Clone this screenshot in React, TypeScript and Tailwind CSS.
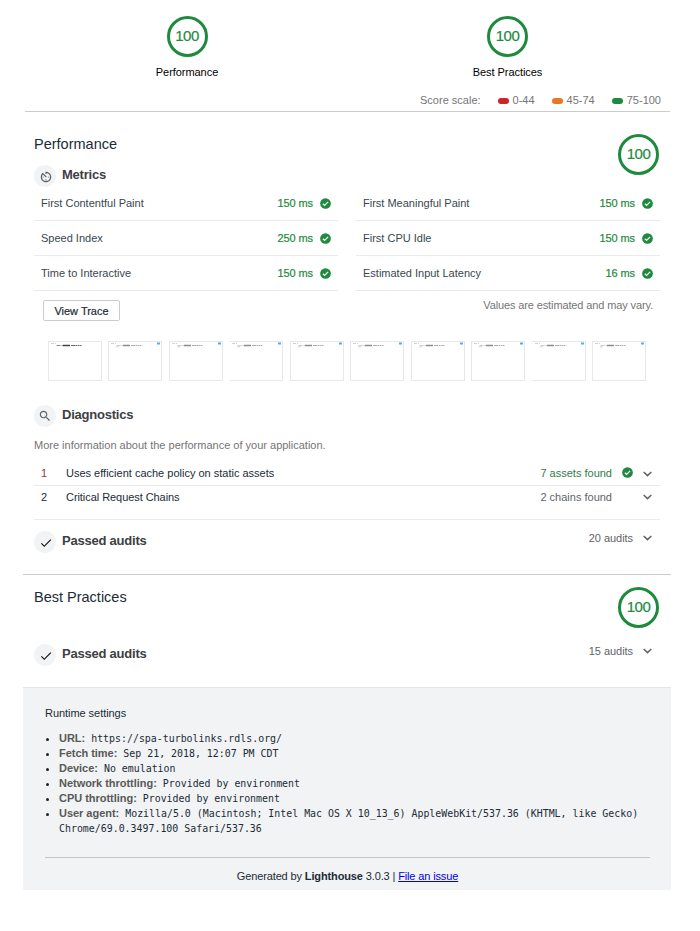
import React from "react";

function Gauge() {
  return (
    <div className="flex h-[41px] w-[41px] shrink-0 items-center justify-center rounded-full border-[3px] border-[#1e8a3e] text-[15px] leading-none tracking-[-0.45px] text-[#1e8a3e] [-webkit-text-stroke:0.2px_#1e8a3e]">
      <span className="relative -top-px">100</span>
    </div>
  );
}

function Passed() {
  return (
    <svg viewBox="1.500 1.500 21 21" className="block h-[11px] w-[11px] shrink-0">
      <circle cx="12" cy="12" r="10.200" fill="#1e8a3e" />
      <path d="M7 12.500l3.300 3.200L17 9" fill="none" stroke="#fff" strokeWidth="2.400" />
    </svg>
  );
}

function Chevron() {
  return (
    <svg viewBox="0 0 10 10" className="block h-[10px] w-[10px] shrink-0" fill="none">
      <path d="M1.700 3 5.500 6.600 9.300 3" stroke="#5f6368" strokeWidth="1.500" />
    </svg>
  );
}

function Badge({ children }: { children: React.ReactNode }) {
  return (
    <div className="flex h-[22px] w-[22px] shrink-0 items-center justify-center rounded-full bg-[#f1f3f4]">
      {children}
    </div>
  );
}

function CheckIcon() {
  return (
    <svg viewBox="0 0 24 24" className="mt-px ml-px h-[14px] w-[14px]">
      <path fill="#111" d="M9 16.170L4.830 12l-1.420 1.410L9 19 21 7l-1.410-1.410z" />
    </svg>
  );
}

function TimerIcon() {
  return (
    <svg viewBox="0 0 24 24" className="mt-px ml-px h-[14px] w-[14px]">
      <path
        fill="#5f6368"
        d="M11 17c0 .55.45 1 1 1s1-.45 1-1-.45-1-1-1-1 .45-1 1zm0-14v4h2V5.080c3.390.49 6 3.390 6 6.920 0 3.870-3.130 7-7 7s-7-3.130-7-7c0-1.680.59-3.220 1.580-4.420L12 13l1.410-1.410-6.800-6.800v.02C4.420 6.450 3 9.050 3 12c0 4.970 4.020 9 9 9 4.970 0 9-4.030 9-9s-4.030-9-9-9h-1zm7 9c0-.55-.45-1-1-1s-1 .45-1 1 .45 1 1 1 1-.45 1-1zM6 12c0 .55.45 1 1 1s1-.45 1-1-.45-1-1-1-1 .45-1 1z"
      />
    </svg>
  );
}

function SearchIcon() {
  return (
    <svg viewBox="0 0 24 24" className="h-[14px] w-[14px]">
      <path
        fill="#5f6368"
        d="M15.500 14h-.79l-.28-.27C15.410 12.590 16 11.110 16 9.500 16 5.910 13.090 3 9.500 3S3 5.910 3 9.500 5.910 16 9.500 16c1.610 0 3.090-.59 4.230-1.570l.27.28v.79l5 4.990L20.490 19l-4.990-5zm-6 0C7.010 14 5 11.990 5 9.500S7.010 5 9.500 5 14 7.010 14 9.500 11.990 14 9.500 14z"
      />
    </svg>
  );
}

function GroupTitle({ icon, title }: { icon: React.ReactNode; title: string }) {
  return (
    <div className="flex h-[22px] items-center gap-[6px]">
      <Badge>{icon}</Badge>
      <span className="mb-[3px] text-[13px] leading-none font-bold tracking-[-0.22px] text-[#3c4043]">{title}</span>
    </div>
  );
}

function Metrics({ rows }: { rows: [string, string][] }) {
  return (
    <div className="w-[304px]">
      {rows.map(([name, value]) => (
        <div key={name} className="flex h-[35px] items-center border-b border-[#e8eaed] pr-[7px] pl-[7px]">
          <span className="grow text-[#37474f]">{name}</span>
          <span className="tracking-[-0.1px] text-[#1e8a3e] [-webkit-text-stroke:0.2px_#1e8a3e]">{value}</span>
          <span className="ml-[7px]">
            <Passed />
          </span>
        </div>
      ))}
    </div>
  );
}

function Category({ title }: { title: string }) {
  return (
    <div className="flex h-[41px] justify-between pr-px">
      <h2 className="mt-[3px] text-[14.500px] leading-[15px] text-[#212b36]">{title}</h2>
      <Gauge />
    </div>
  );
}

function Thumb({ first, open }: { first: boolean; open: boolean }) {
  return (
    <div
      className={
        "h-10 w-[54px] overflow-hidden border border-[#e8e8e8] " + (open ? "border-l-transparent" : "")
      }
    >
      <svg viewBox="0 0 52 38" className="block h-[38px] w-[52px]">
        <path d="M2 1.500h3M6 1.500h1" stroke="#d6d3bd" />
        <path d="M7.500 3.500h4M12.500 3.500h1.500" stroke={first ? "#8a8a8a" : "#c9ced2"} />
        <path d="M14 3.500h7" stroke={first ? "#444" : "#8c8c8c"} strokeWidth="1.500" />
        <path d="M22 3.500h4M26.500 3.500h2M29 3.500h1.500M31 3.500h1.500" stroke={first ? "#666" : "#aaa"} strokeWidth="1.200" />
        {!first && <path d="M7 4.700h3" stroke="#dce3e8" strokeWidth="1.500" />}
        {!first && <path d="M48 1.500h3" stroke="#55a9ee" strokeWidth="2" />}
      </svg>
    </div>
  );
}

function Scale({ color, label }: { color: string; label: string }) {
  return (
    <div className="flex items-center gap-1">
      <span className={"h-[6px] w-[11px] rounded-[3px] " + color} />
      <span>{label}</span>
    </div>
  );
}

function Setting({ name, value }: { name: string; value: string }) {
  return (
    <li className="flex">
      <span className="mt-[7px] mr-[10px] ml-px h-[3px] w-[3px] shrink-0 rounded-full bg-[#212121]" />
      <p>
        <span className="font-bold tracking-[-0.03px] text-[#595959]">{name}:</span>
        <span className="ml-[6px] font-['DejaVu_Sans_Mono',monospace] text-[9.920px] text-[#212b36]">{value}</span>
      </p>
    </li>
  );
}

function PassedAudits({ count }: { count: string }) {
  return (
    <div className="flex h-[22px] justify-between">
      <GroupTitle icon={<CheckIcon />} title="Passed audits" />
      <div className="flex h-[14px] items-center pr-2 text-[#5f6368]">
        <span className="tracking-[-0.05px]">{count}</span>
        <span className="ml-[9px]">
          <Chevron />
        </span>
      </div>
    </div>
  );
}

export default function App() {
  return (
    <div className="h-[931px] w-[700px] overflow-hidden bg-white font-['Liberation_Sans',Arial,sans-serif] text-[11px] leading-[15px] text-[#212b36]">
      <header className="ml-[25px] h-[112px] w-[645px] border-b border-[#ccc] pt-4">
        <div className="flex text-black">
          <div className="ml-[112px] flex w-[100px] flex-col items-center">
            <Gauge />
            <span className="mt-[8px] tracking-[-0.05px]">Performance</span>
          </div>
          <div className="ml-[220px] flex w-[101px] flex-col items-center">
            <Gauge />
            <span className="mt-[8px] tracking-[-0.05px]">Best Practices</span>
          </div>
        </div>
        <div className="mt-[13px] flex items-center justify-end gap-[17px] pr-[9px] text-[#757575]">
          <span>Score scale:</span>
          <Scale color="bg-[#cc2428]" label="0-44" />
          <Scale color="bg-[#e87722]" label="45-74" />
          <Scale color="bg-[#1e8a3e]" label="75-100" />
        </div>
      </header>

      <section className="ml-[34px] w-[626px] pt-[22px]">
        <Category title="Performance" />
        <div className="-mt-[10px]">
          <GroupTitle icon={<TimerIcon />} title="Metrics" />
        </div>
        <div className="-mt-px flex justify-between">
          <Metrics
            rows={[
              ["First Contentful Paint", "150 ms"],
              ["Speed Index", "250 ms"],
              ["Time to Interactive", "150 ms"],
            ]}
          />
          <Metrics
            rows={[
              ["First Meaningful Paint", "150 ms"],
              ["First CPU Idle", "150 ms"],
              ["Estimated Input Latency", "16 ms"],
            ]}
          />
        </div>
        <div className="flex h-[50px] items-start justify-between pt-[9px] pr-[7px] pl-[9px]">
          <button className="h-[21px] w-[77px] rounded-[2px] border border-[#ccc] bg-white pt-px text-[11px] leading-[19px] text-[#212b36] [-webkit-text-stroke:0.2px_#212b36]">
            View Trace
          </button>
          <span className="-mt-[2px] tracking-[-0.12px] text-[#757575]">Values are estimated and may vary.</span>
        </div>
        <div className="mr-[14px] ml-[14px] flex h-10 justify-between">
          {Array.from({ length: 10 }, (_, i) => (
            <Thumb key={i} first={i === 0} open={i === 3 || i === 8} />
          ))}
        </div>

        <div className="mt-[24px]">
          <GroupTitle icon={<SearchIcon />} title="Diagnostics" />
          <p className="mt-[11px] text-[#757575]">More information about the performance of your application.</p>
        </div>
        <div className="mt-[9px] flex h-[24px] items-center border-b border-[#e8eaed] pr-2 pl-[7px]">
          <span className="w-[25px] text-[#8a3a35]">1</span>
          <span className="grow">Uses efficient cache policy on static assets</span>
          <span className="text-[#2f7d46]">7 assets found</span>
          <span className="mb-[2px] ml-[10px]">
            <Passed />
          </span>
          <span className="ml-[9px]">
            <Chevron />
          </span>
        </div>
        <div className="flex h-[34px] items-start border-b border-[#e8eaed] pt-[4px] pr-2 pl-[7px]">
          <span className="w-[25px]">2</span>
          <span className="grow tracking-[-0.06px]">Critical Request Chains</span>
          <span className="mr-[30px] text-[#5f6368]">2 chains found</span>
          <span className="mt-[2px]">
            <Chevron />
          </span>
        </div>
        <div className="mt-[11px]">
          <PassedAudits count="20 audits" />
        </div>
      </section>

      <div className="mt-[21px] ml-[23px] w-[648px] border-t border-[#ccc]" />

      <section className="ml-[34px] w-[626px] pt-3">
        <Category title="Best Practices" />
        <div className="mt-[16px]">
          <PassedAudits count="15 audits" />
        </div>
      </section>

      <footer className="mt-[21px] ml-[23px] h-[203px] w-[648px] border-t border-[#e4e6e8] bg-[#f1f3f4] pr-[21px] pl-[22px]">
        <p className="pt-[18px] tracking-[-0.05px]">Runtime settings</p>
        <ul className="mt-[10px]">
          <Setting name="URL" value="https://spa-turbolinks.rdls.org/" />
          <Setting name="Fetch time" value="Sep 21, 2018, 12:07 PM CDT" />
          <Setting name="Device" value="No emulation" />
          <Setting name="Network throttling" value="Provided by environment" />
          <Setting name="CPU throttling" value="Provided by environment" />
          <Setting
            name="User agent"
            value="Mozilla/5.0 (Macintosh; Intel Mac OS X 10_13_6) AppleWebKit/537.36 (KHTML, like Gecko) Chrome/69.0.3497.100 Safari/537.36"
          />
        </ul>
        <div className="mt-[21px] border-t border-[#c4c7ca] pt-[11px] text-center tracking-[-0.13px]">
          Generated by <b>Lighthouse</b> 3.0.3 | <a className="text-[#0000ee] underline">File an issue</a>
        </div>
      </footer>
    </div>
  );
}
